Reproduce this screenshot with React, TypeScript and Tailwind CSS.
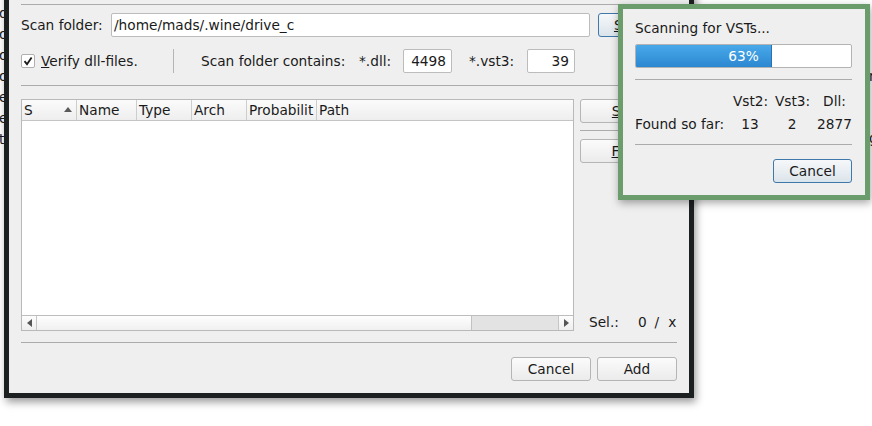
import React from 'react';

const cols = [
  { label: 'S', w: 'w-[55px]', sort: true },
  { label: 'Name', w: 'w-[60px]' },
  { label: 'Type', w: 'w-[55px]' },
  { label: 'Arch', w: 'w-[55px]' },
  { label: 'Probabilit', w: 'w-[70px]' },
];

function Btn({ children, className = '', primary = false }: { children: React.ReactNode; className?: string; primary?: boolean }) {
  return (
    <div
      className={
        'h-[24px] flex items-center justify-center rounded-[3px] border ' +
        (primary
          ? 'border-[#3f78ab] bg-gradient-to-b from-[#f6f8fa] to-[#dbe4eb] '
          : 'border-[#b5b5b5] bg-gradient-to-b from-[#fbfbfb] to-[#ebebeb] ') +
        className
      }
    >
      {children}
    </div>
  );
}

function Field({ children, className = '' }: { children: React.ReactNode; className?: string }) {
  return (
    <div className={'h-[24px] flex items-center bg-white border border-[#bcbcbc] rounded-[2px] ' + className}>
      {children}
    </div>
  );
}

export default function App() {
  return (
    <div className="relative w-[872px] h-[426px] overflow-hidden bg-white text-[#1a1a1a] font-['DejaVu_Sans',sans-serif] text-[13.7px] leading-[16px]">
      {/* clipped text of the window underneath */}
      <div className="absolute left-0 top-[5px] w-[4px] overflow-hidden flex flex-col">
        {['d', 'o', 'o', 'o', 'e', 'e', 't'].map((c, i) => (
          <span key={i} className="h-[21px] -ml-[1px]">{c}</span>
        ))}
      </div>
      <div className="absolute left-[869px] top-[68px] w-[3px] overflow-hidden">n</div>
      <div className="absolute left-[869px] top-[130px] w-[3px] overflow-hidden">g</div>

      {/* main dialog */}
      <div className="absolute left-[4px] top-[-10px] w-[690px] h-[408px] border-[5px] border-[#1d2021] bg-[#efefef] shadow-[2px_4px_8px_rgba(0,0,0,0.4)]">
        <div className="flex flex-col px-[12px]">
          <div className="mt-[9px] h-px bg-[#ababab]" />

          <div className="mt-[8px] h-[24px] flex items-center">
            <span className="w-[90px]">Scan folder:</span>
            <Field className="w-[479px] pl-[2px]">/home/mads/.wine/drive_c</Field>
            <Btn primary className="ml-[8px] w-[79px]">
              <span><span className="underline">S</span>earch</span>
            </Btn>
          </div>

          <div className="mt-[12px] h-[24px] flex items-center">
            <div className="w-[152px] flex items-center">
              <div className="w-[14px] h-[14px] bg-white border border-[#b0b0b0] rounded-[2px] flex items-center justify-center">
                <svg width="10" height="10" viewBox="0 0 10 10">
                  <path d="M1.5 5.2 L4 8.2 L8.6 1.4" fill="none" stroke="#1a1a1a" strokeWidth="1.8" />
                </svg>
              </div>
              <span className="ml-[6px]"><span className="underline">V</span>erify dll-files.</span>
            </div>
            <div className="w-px h-[24px] bg-[#b5b5b5]" />
            <span className="ml-[27px] w-[158px]">Scan folder contains:</span>
            <span className="w-[44px]">*.dll:</span>
            <Field className="w-[49px] justify-end pr-[5px]">4498</Field>
            <span className="ml-[17px] w-[58px]">*.vst3:</span>
            <Field className="w-[48px] justify-end pr-[5px]">39</Field>
          </div>

          <div className="mt-[12px] h-px bg-[#ababab]" />

          <div className="mt-[13px] h-[232px] flex">
            {/* table */}
            <div className="w-[553px] h-full flex flex-col border border-[#b9b9b9] bg-white">
              <div className="h-[21px] flex border-b border-[#c4c4c4] bg-gradient-to-b from-[#fbfbfb] to-[#eeeeee]">
                {cols.map((c) => (
                  <div key={c.label} className={c.w + ' relative flex items-center pl-[2px] border-r border-[#cdcdcd] overflow-hidden whitespace-nowrap'}>
                    {c.label}
                    {c.sort && (
                      <svg className="absolute right-[4px] top-[7px]" width="8" height="5" viewBox="0 0 8 5">
                        <path d="M0 5 L4 0 L8 5 Z" fill="#5a5a5a" />
                      </svg>
                    )}
                  </div>
                ))}
                <div className="flex-1 flex items-center pl-[2px]">Path</div>
              </div>
              <div className="flex-1" />
              <div className="h-[15px] flex border-t border-[#bdbdbd] bg-[#e3e3e3]">
                <div className="w-[15px] flex items-center justify-center border-r border-[#c6c6c6] bg-gradient-to-b from-[#fdfdfd] to-[#eeeeee]">
                  <svg width="5" height="8" viewBox="0 0 5 8"><path d="M5 0 L0 4 L5 8 Z" fill="#555" /></svg>
                </div>
                <div className="flex-1 border-r border-[#c2c2c2] bg-gradient-to-b from-[#fefefe] to-[#f0f0f0]" />
                <div className="w-[86px]" />
                <div className="w-[15px] flex items-center justify-center border-l border-[#c6c6c6] bg-gradient-to-b from-[#fdfdfd] to-[#eeeeee]">
                  <svg width="5" height="8" viewBox="0 0 5 8"><path d="M0 0 L5 4 L0 8 Z" fill="#555" /></svg>
                </div>
              </div>
            </div>

            {/* side column */}
            <div className="ml-[6px] w-[97px] flex flex-col">
              <Btn><span><span className="underline">S</span>can</span></Btn>
              <div className="mt-[7px] h-px bg-[#ababab]" />
              <Btn className="mt-[8px]"><span><span className="underline">F</span>ilter</span></Btn>
              <div className="mt-auto mb-[1px] flex items-center">
                <span className="ml-[9px]">Sel.:</span>
                <span className="ml-[19px]">0</span>
                <span className="ml-[8px]">/</span>
                <span className="ml-[9px]">x</span>
              </div>
            </div>
          </div>

          <div className="mt-[11px] h-px bg-[#ababab]" />

          <div className="mt-[14px] flex justify-end gap-[6px]">
            <Btn className="w-[80px]">Cancel</Btn>
            <Btn className="w-[80px]">Add</Btn>
          </div>
        </div>
      </div>

      {/* progress popup */}
      <div className="absolute left-[618px] top-[4px] w-[252px] h-[196px] border-[5px] border-[#6b9c6b] bg-[#efefef] shadow-[1px_3px_8px_rgba(0,0,0,0.35)]">
        <div className="flex flex-col pl-[12px] pr-[13px]">
          <div className="mt-[11px]">Scanning for VSTs...</div>
          <div className="mt-[8px] h-[24px] relative flex bg-white border border-[#b3b3b3] rounded-[2px] overflow-hidden">
            <div className="w-[136px] h-full border-r border-[#2c70ad] bg-gradient-to-b from-[#48a9e9] to-[#2c87d1]" />
            <div className="absolute inset-0 flex items-center justify-center text-white">63%</div>
          </div>
          <div className="mt-[11px] h-px bg-[#ababab]" />
          <div className="mt-[13px] flex">
            <span className="flex-1" />
            <span className="w-[34px] text-center">Vst2:</span>
            <span className="ml-[8px] w-[34px] text-center">Vst3:</span>
            <span className="ml-[8px] w-[35px] text-center">Dll:</span>
          </div>
          <div className="mt-[7px] flex">
            <span className="flex-1">Found so far:</span>
            <span className="w-[34px] text-center">13</span>
            <span className="ml-[8px] w-[34px] text-center">2</span>
            <span className="ml-[8px] w-[35px] text-center">2877</span>
          </div>
          <div className="mt-[12px] h-px bg-[#ababab]" />
          <div className="mt-[14px] flex justify-end">
            <Btn primary className="w-[79px]">Cancel</Btn>
          </div>
        </div>
      </div>
    </div>
  );
}
